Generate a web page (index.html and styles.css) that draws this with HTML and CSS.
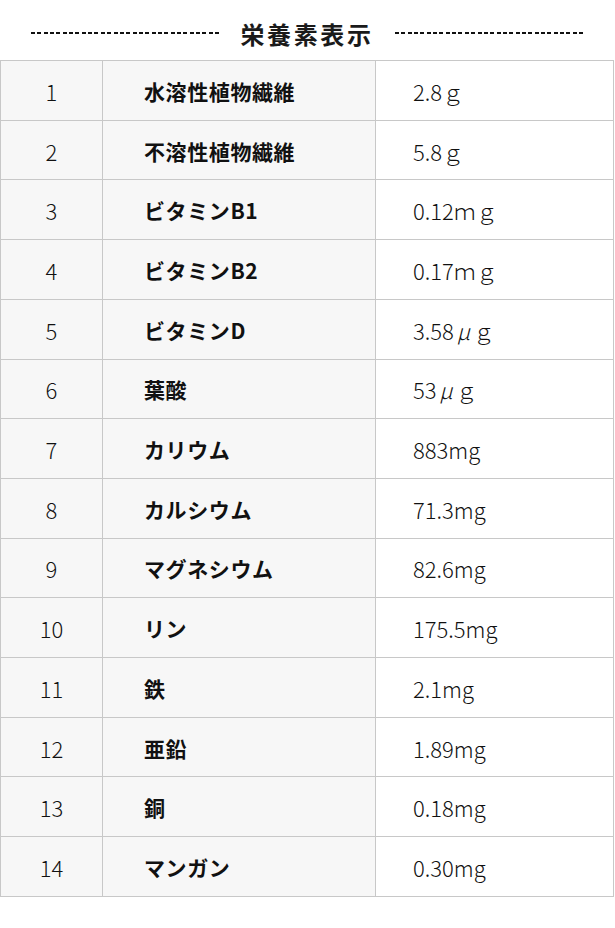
FILE: index.html
```html
<!DOCTYPE html>
<html lang="ja">
<head>
<meta charset="utf-8">
<title>栄養素表示</title>
<link rel="stylesheet" href="styles.css">
</head>
<body>
<div class="page">
  <div class="heading">
    <span class="dash"></span>
    <h1 class="title">栄養素表示</h1>
    <span class="dash"></span>
  </div>
  <div class="table">
    <div class="no">1</div><div class="name">水溶性植物繊維</div><div class="val">2.8ｇ</div>
    <div class="no">2</div><div class="name">不溶性植物繊維</div><div class="val">5.8ｇ</div>
    <div class="no">3</div><div class="name">ビタミンB1</div><div class="val">0.12ｍｇ</div>
    <div class="no">4</div><div class="name">ビタミンB2</div><div class="val">0.17ｍｇ</div>
    <div class="no">5</div><div class="name">ビタミンD</div><div class="val">3.58<span class="mu">μ</span>ｇ</div>
    <div class="no">6</div><div class="name">葉酸</div><div class="val">53<span class="mu">μ</span>ｇ</div>
    <div class="no">7</div><div class="name">カリウム</div><div class="val">883mg</div>
    <div class="no">8</div><div class="name">カルシウム</div><div class="val">71.3mg</div>
    <div class="no">9</div><div class="name">マグネシウム</div><div class="val">82.6mg</div>
    <div class="no">10</div><div class="name">リン</div><div class="val">175.5mg</div>
    <div class="no">11</div><div class="name">鉄</div><div class="val">2.1mg</div>
    <div class="no">12</div><div class="name">亜鉛</div><div class="val">1.89mg</div>
    <div class="no">13</div><div class="name">銅</div><div class="val">0.18mg</div>
    <div class="no">14</div><div class="name">マンガン</div><div class="val">0.30mg</div>
  </div>
</div>
</body>
</html>
```
FILE: styles.css
```css
html, body {
  margin: 0;
  padding: 0;
  background: #fff;
}
body {
  font-family: "Noto Sans CJK JP", "Noto Sans", sans-serif;
  color: #222;
}
.page {
  width: 615px;
}
.heading {
  height: 60px;
  box-sizing: border-box;
  padding-top: 6px;
  display: flex;
  align-items: center;
  justify-content: center;
}
.dash {
  display: block;
  width: 190px;
  height: 2px;
  background: repeating-linear-gradient(to right, #111 0, #111 4px, transparent 4px, transparent 6.35px);
}
.title {
  margin: 0 21px 0 20px;
  font-size: 24px;
  font-weight: 700;
  letter-spacing: 2.6px;
  line-height: 1;
  color: #1a1a1a;
  padding-top: 2px;
}
.table {
  width: 614px;
  box-sizing: border-box;
  display: grid;
  grid-template-columns: 102px 273px 238px;
  grid-auto-rows: 59.71px;
  border-top: 1px solid #c8c8c8;
  border-left: 1px solid #c8c8c8;
}
.table > div {
  box-sizing: border-box;
  border-right: 1px solid #c8c8c8;
  border-bottom: 1px solid #c8c8c8;
  display: flex;
  align-items: center;
  padding-top: 1px;
}
.no {
  justify-content: center;
  background: #f7f7f7;
  font-size: 22px;
  font-weight: 300;
  color: #111;
}
.name {
  background: #f7f7f7;
  padding-left: 41px;
  font-size: 21px;
  font-weight: 700;
  letter-spacing: 0.6px;
  color: #111;
}
.val {
  background: #fff;
  padding-left: 37px;
  font-size: 22px;
  font-weight: 300;
  color: #111;
}
.mu {
  display: inline-block;
  width: 19px;
  text-align: center;
  font-style: italic;
}
```
